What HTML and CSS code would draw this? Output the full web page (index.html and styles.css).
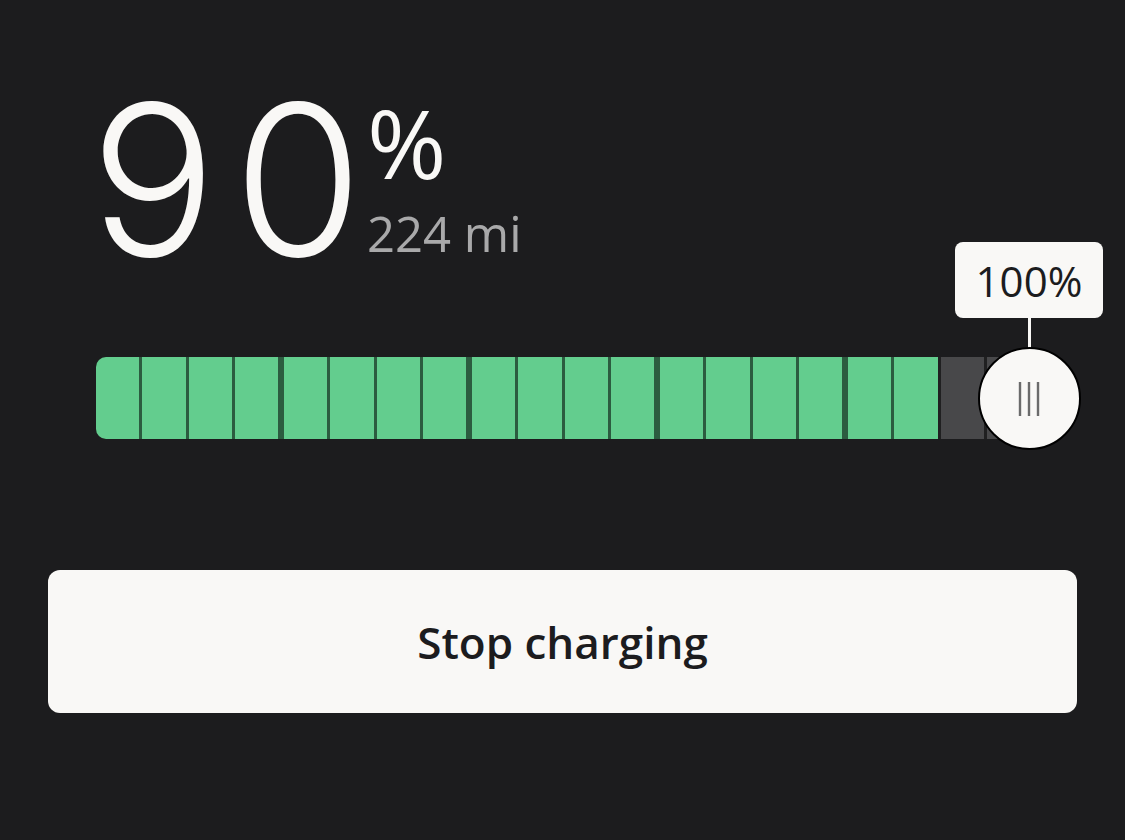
FILE: index.html
```html
<!DOCTYPE html>
<html lang="en">
<head>
<meta charset="utf-8">
<title>Charging</title>
<link rel="stylesheet" href="styles.css">
</head>
<body>
<main class="page">
  <section class="hero">
    <div class="soc"><span>9</span><span>0</span></div>
    <div class="soc-side">
      <div class="pct">%</div>
      <div class="range">224 mi</div>
    </div>
  </section>

  <section class="gauge">
    <div class="bar">
      <span class="seg on"></span><span class="seg on"></span><span class="seg on"></span><span class="seg on"></span>
      <span class="seg on group"></span><span class="seg on"></span><span class="seg on"></span><span class="seg on"></span>
      <span class="seg on group"></span><span class="seg on"></span><span class="seg on"></span><span class="seg on"></span>
      <span class="seg on group"></span><span class="seg on"></span><span class="seg on"></span><span class="seg on"></span>
      <span class="seg on group"></span><span class="seg on"></span><span class="seg off"></span><span class="seg off"></span>
    </div>
    <div class="limit">
      <div class="tip">100%</div>
      <div class="stem"></div>
      <div class="thumb">
        <svg width="22" height="34" viewBox="0 0 22 34" aria-hidden="true">
          <path d="M2 0V34M11 0V34M20 0V34" stroke="#6b6b6b" stroke-width="2.4" fill="none"/>
        </svg>
      </div>
    </div>
  </section>

  <button class="stop">Stop charging</button>
</main>
</body>
</html>
```

FILE: styles.css
```css
html, body {
  margin: 0;
  padding: 0;
  background: #1c1c1e;
}

body {
  width: 1125px;
  height: 840px;
  overflow: hidden;
  font-family: "Open Sans", "Noto Sans", sans-serif;
  color: #f9f8f6;
}

.page {
  padding: 0 48px;
  display: flex;
  flex-direction: column;
}

.hero {
  display: flex;
  align-items: flex-start;
  margin-left: 42px;
  height: 270px;
  padding-top: 60px;
  box-sizing: border-box;
}

.soc {
  display: flex;
  gap: 17px;
  font-family: "Inter", "Open Sans", sans-serif;
  font-size: 210px;
  font-weight: 300;
  line-height: 1;
  margin-top: 15px;
}

.soc-side {
  display: flex;
  flex-direction: column;
  margin-left: 4px;
  margin-top: 34px;
}

.pct {
  font-size: 96px;
  font-weight: 400;
  line-height: 1;
}

.range {
  font-size: 49px;
  font-weight: 400;
  line-height: 1;
  color: #a9a9aa;
  margin-top: 19px;
}

.gauge {
  position: relative;
  margin-top: 87px;
  margin-left: 48px;
  width: 934px;
  height: 82px;
}

.bar {
  display: flex;
  height: 82px;
  border-radius: 10px 0 0 10px;
  overflow: hidden;
}

.seg {
  flex: 1;
  border-left: 3px solid rgba(0, 0, 0, 0.55);
}

.seg:first-child {
  border-left: 0;
}

.seg.group {
  border-left-width: 6px;
}

.seg.on {
  background-color: #63cd8e;
}

.seg.off {
  background-color: #48484a;
}

.limit {
  position: absolute;
  right: -73px;
  top: -115px;
  width: 148px;
  display: flex;
  flex-direction: column;
  align-items: center;
}

.tip {
  width: 148px;
  height: 76px;
  box-sizing: border-box;
  background: #f9f8f6;
  border-radius: 8px;
  color: #1c1c1e;
  font-size: 42px;
  font-weight: 400;
  display: flex;
  align-items: center;
  justify-content: center;
}

.stem {
  width: 3px;
  height: 30px;
  background: #f9f8f6;
}

.thumb {
  width: 103px;
  height: 103px;
  box-sizing: border-box;
  border-radius: 50%;
  background: #f9f8f6;
  border: 2.5px solid #000;
  display: flex;
  align-items: center;
  justify-content: center;
  margin-top: -1px;
}

.stop {
  margin-top: 131px;
  height: 143px;
  width: 100%;
  border: 0;
  border-radius: 12px;
  background: #f9f8f6;
  color: #1c1c1e;
  font-family: "Open Sans", "Noto Sans", sans-serif;
  font-size: 44px;
  font-weight: 600;
  cursor: pointer;
}
```
